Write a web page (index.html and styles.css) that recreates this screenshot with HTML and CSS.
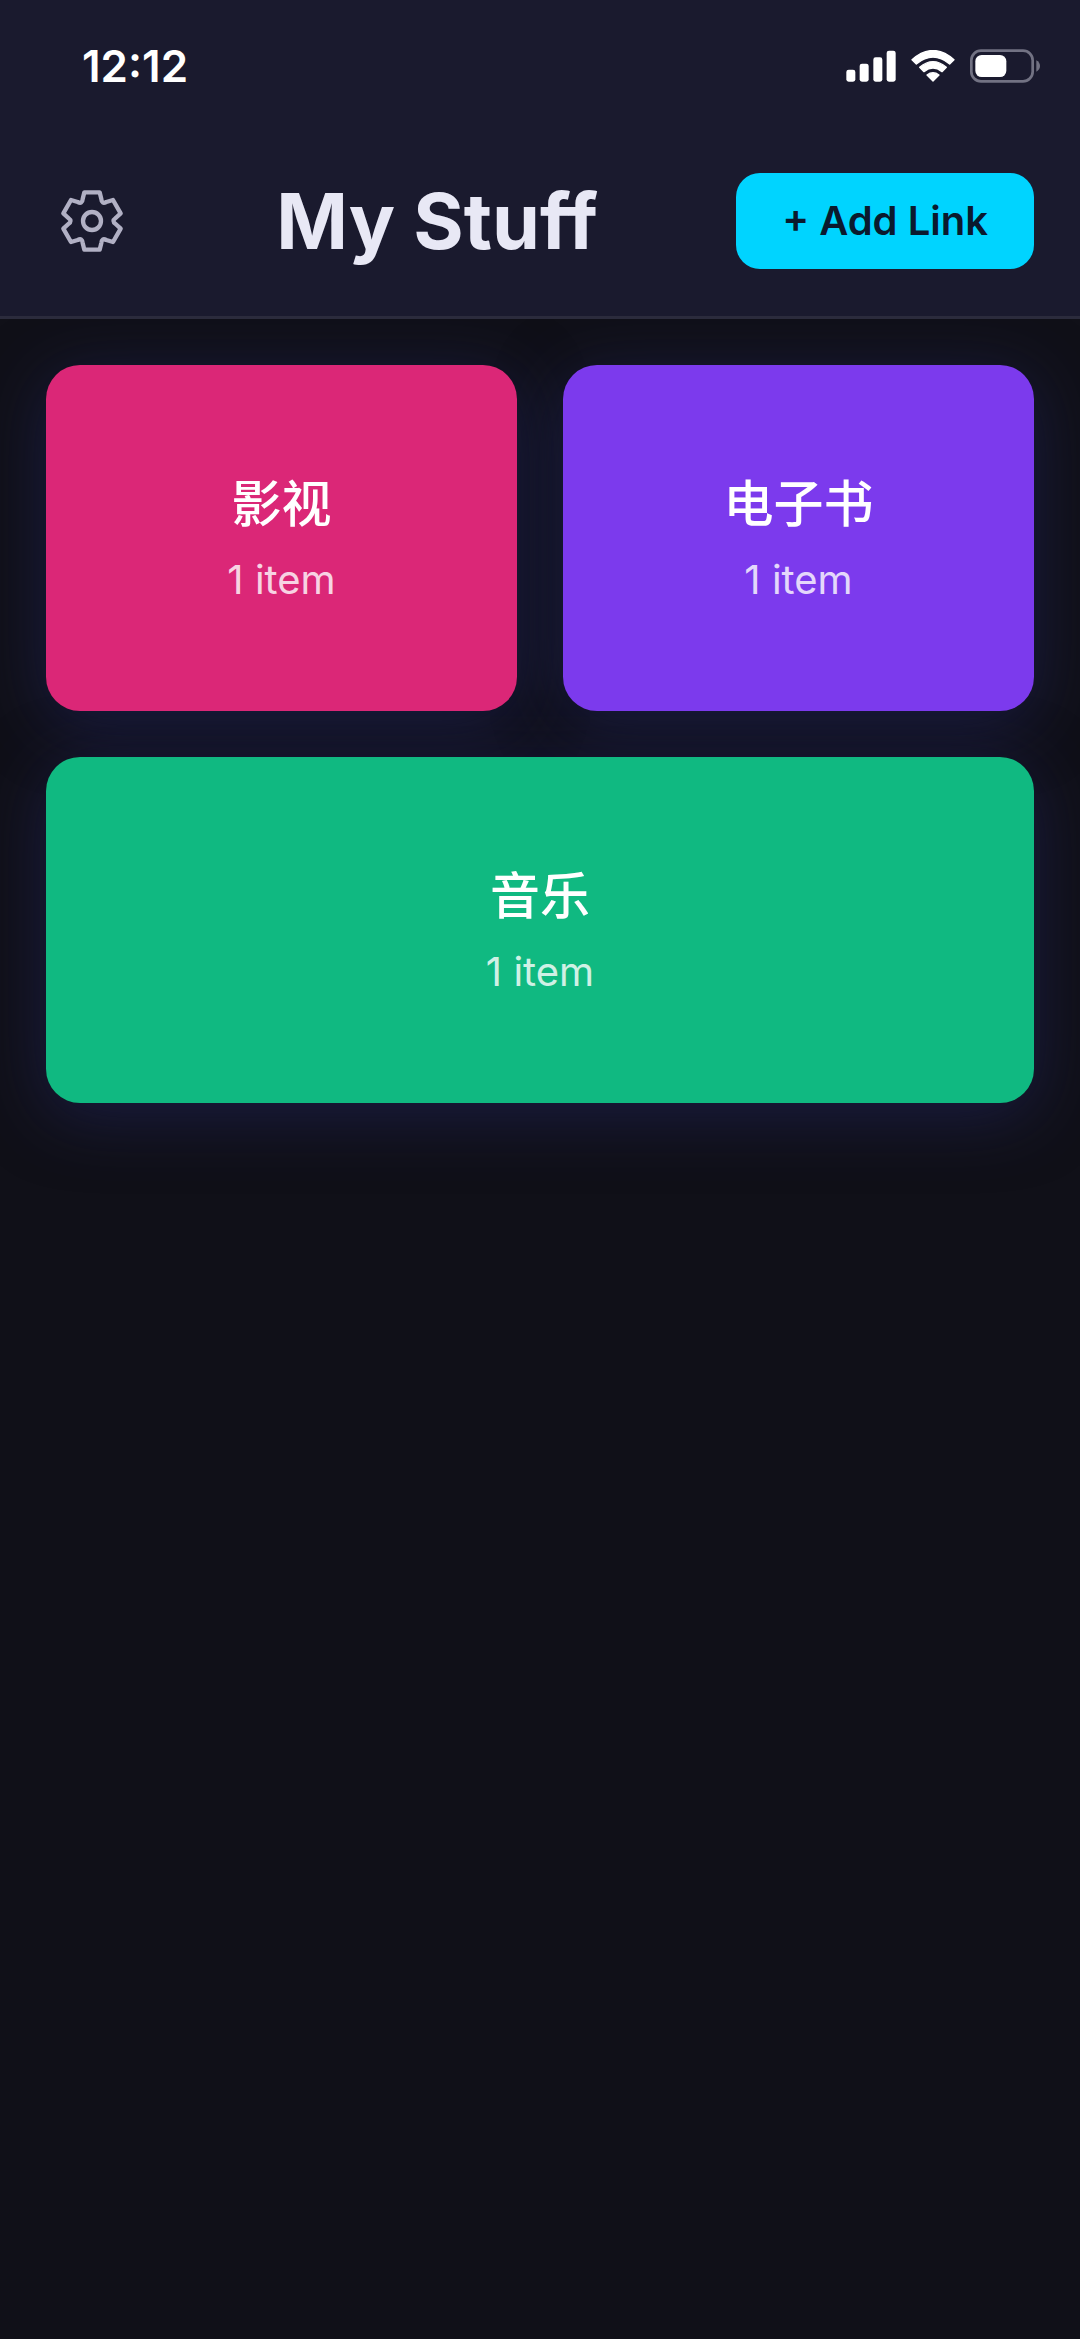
FILE: index.html
```html
<!DOCTYPE html>
<html lang="en">
<head>
  <meta charset="UTF-8">
  <meta name="viewport" content="width=device-width, initial-scale=1">
  <title>My Stuff</title>
  <link rel="stylesheet" href="styles.css">
</head>
<body>
  <header>
    <div class="status-bar">
      <span class="time">12:12</span>
      <div class="status-icons">
        <svg width="50" height="32" viewBox="0 0 150 96" fill="#fff">
          <rect x="1" y="59" width="27" height="36" rx="7"/>
          <rect x="41" y="41" width="27" height="54" rx="7"/>
          <rect x="82" y="22" width="27" height="73" rx="7"/>
          <rect x="122" y="2" width="27" height="93" rx="7"/>
        </svg>
        <svg width="44" height="32" viewBox="0 0 132 96" fill="#fff" stroke="#fff" stroke-width="4" stroke-linejoin="round">
          <path d="M3 29 Q66 -26 129 29 L116 42 Q66 1 16 42 Z"/>
          <path d="M26 52 Q66 18 106 52 L93 65 Q66 43 39 65 Z"/>
          <path d="M48 75 Q66 61 84 75 L66 93 Z"/>
        </svg>
        <svg width="70" height="34" viewBox="0 0 210 102">
          <rect x="4" y="5" width="184" height="92" rx="29" fill="none" stroke="#727283" stroke-width="8"/>
          <path d="M199 34 Q210 40 210 51 Q210 62 199 68 Z" fill="#727283"/>
          <rect x="16" y="18" width="93" height="66" rx="19" fill="#fff"/>
        </svg>
      </div>
    </div>
    <div class="title-bar">
      <button class="settings" aria-label="Settings">
        <svg width="66" height="66" viewBox="-99 -99 198 198" fill="none" stroke="#b1b0c4" stroke-width="13" stroke-linejoin="round">
          <path d="M-23 -86 L23 -86 L28 -66 Q29 -50 43 -57 L63 -63 L86 -23 L71 -9 Q58 0 71 9 L86 23 L63 63 L43 57 Q29 50 28 66 L23 86 L-23 86 L-28 66 Q-29 50 -43 57 L-63 63 L-86 23 L-71 9 Q-58 0 -71 -9 L-86 -23 L-63 -63 L-43 -57 Q-29 -50 -28 -66 Z"/>
          <circle r="27"/>
        </svg>
      </button>
      <h1>My Stuff</h1>
      <button class="add">+ Add Link</button>
    </div>
  </header>
  <main class="categories">
    <a href="#movies" class="card movies">
      <h2>影视</h2>
      <p>1 item</p>
    </a>
    <a href="#books" class="card books">
      <h2>电子书</h2>
      <p>1 item</p>
    </a>
    <a href="#music" class="card music">
      <h2>音乐</h2>
      <p>1 item</p>
    </a>
  </main>
</body>
</html>
```

FILE: styles.css
```css
* {
  padding: 0;
  margin: 0;
  box-sizing: border-box;
}

body {
  min-height: 100vh;
  background-color: #101018;
  font-family: Inter, "Noto Sans CJK SC", sans-serif;
}

header {
  position: relative;
  z-index: 1;
  background-color: #1a1a2e;
  border-bottom: 3px solid #2b2b3c;
}

.status-bar {
  display: flex;
  justify-content: space-between;
  align-items: center;
  height: 132px;
  padding: 0 40px 0 82px;
}

.time {
  color: white;
  font-size: 44px;
  font-weight: 600;
}

.status-icons {
  display: flex;
  align-items: center;
  gap: 15px;
}

.title-bar {
  display: flex;
  justify-content: space-between;
  align-items: center;
  padding: 41px 46px 47px;
}

.title-bar h1 {
  color: #e8e8f5;
  font-size: 77px;
  line-height: 96px;
  font-weight: 700;
  font-variant-ligatures: none;
}

button {
  border: none;
  background: none;
  font-family: inherit;
  cursor: pointer;
}

.settings {
  display: flex;
  justify-content: center;
  width: 92px;
}

.add {
  padding: 24px 46px;
  border-radius: 24px;
  background-color: #00d4ff;
  color: #0a1a2e;
  font-size: 40px;
  line-height: 48px;
  font-weight: 600;
}

.categories {
  position: relative;
  z-index: 0;
  display: grid;
  grid-template-columns: repeat(2, 1fr);
  gap: 46px;
  padding: 46px;
}

.card {
  position: relative;
  display: flex;
  flex-direction: column;
  justify-content: center;
  align-items: center;
  gap: 22px;
  min-height: 346px;
  padding-top: 2px;
  border-radius: 34px;
  color: white;
  text-decoration: none;
}

/* glow sits behind every card */
.card::before {
  content: "";
  position: absolute;
  inset: 0;
  z-index: -1;
  border-radius: 34px;
  box-shadow: 0 12px 66px rgba(34, 38, 100, 0.55);
}

.card h2 {
  font-size: 50px;
  line-height: 60px;
  font-weight: 500;
}

.card p {
  font-size: 40px;
  line-height: 48px;
  opacity: 0.8;
}

.movies {
  background-color: #db2777;
}

.books {
  background-color: #7c3aed;
}

.music {
  grid-column: span 2;
  background-color: #10b981;
}
```
